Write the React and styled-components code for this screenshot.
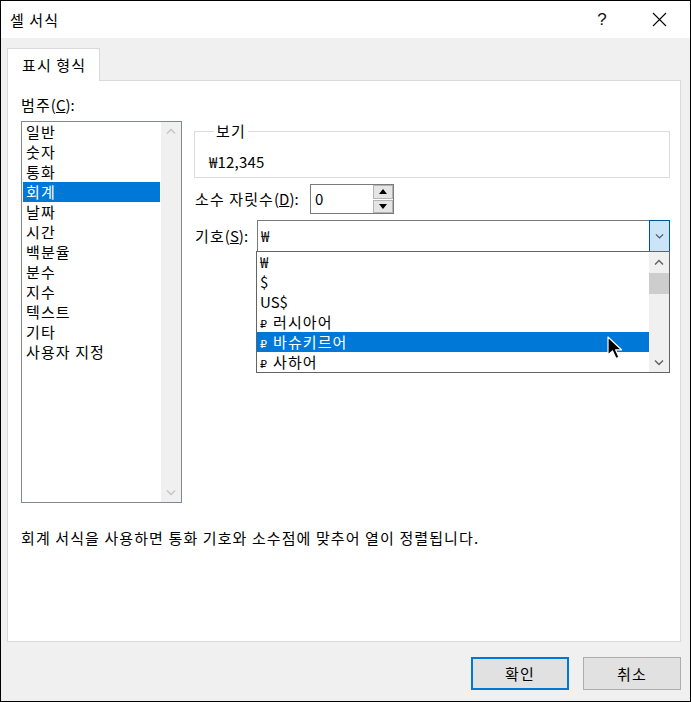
import React from 'react';
import styled, { createGlobalStyle } from 'styled-components';

const FONT = `"Noto Sans CJK KR", "Noto Sans", "DejaVu Sans", sans-serif`;

const GlobalStyle = createGlobalStyle`
  html, body { margin: 0; padding: 0; background: #fff; }
  body { font-family: ${FONT}; font-size: 15px; letter-spacing: 1.1px; color: #000; }
  * { box-sizing: border-box; }
`;

const categories = ['일반', '숫자', '통화', '회계', '날짜', '시간', '백분율', '분수', '지수', '텍스트', '기타', '사용자 지정'];
const symbols = [
  { sign: '₩' },
  { sign: '$' },
  { sign: 'US$' },
  { sign: '₽', name: '러시아어' },
  { sign: '₽', name: '바슈키르어' },
  { sign: '₽', name: '사하어' },
];

const Chevron = ({ dir = 'down', color = '#606060', size = 10 }) => (
  <svg width={size} height={size * 0.7} viewBox="0 0 10 7">
    <polyline
      points={dir === 'up' ? '1,5.5 5,1.5 9,5.5' : '1,1.5 5,5.5 9,1.5'}
      fill="none"
      stroke={color}
      strokeWidth="1.4"
    />
  </svg>
);

const Triangle = ({ dir }) => (
  <svg width="8" height="5" viewBox="0 0 8 5">
    <polygon points={dir === 'up' ? '0,5 4,0 8,5' : '0,0 8,0 4,5'} fill="#000" />
  </svg>
);

const App = () => {
  return (
    <>
      <GlobalStyle />
      <Window>
        <TitleBar>
          <Title>셀 서식</Title>
          <TitleButtons>
            <HelpMark>?</HelpMark>
            <CloseMark>
              <svg width="15" height="15" viewBox="0 0 15 15">
                <path d="M1 1 L14 14 M14 1 L1 14" stroke="#000" strokeWidth="1.1" />
              </svg>
            </CloseMark>
          </TitleButtons>
        </TitleBar>
        <Content>
          <TabStrip>
            <Tab>표시 형식</Tab>
          </TabStrip>
          <Panel>
            <Columns>
              <LeftCol>
                <Label>
                  범주<Key>(<u>C</u>):</Key>
                </Label>
                <ListBox>
                  <ListItems>
                    {categories.map((c, i) => (
                      <ListItem key={c} selected={i === 3}>
                        {c}
                      </ListItem>
                    ))}
                  </ListItems>
                  <ScrollTrack>
                    <ArrowBox>
                      <Chevron dir="up" color="#c5c5c5" />
                    </ArrowBox>
                    <ArrowBox>
                      <Chevron dir="down" color="#c5c5c5" />
                    </ArrowBox>
                  </ScrollTrack>
                </ListBox>
              </LeftCol>
              <RightCol>
                <GroupBox>
                  <Legend>보기</Legend>
                  <Preview>₩12,345</Preview>
                </GroupBox>
                <FieldRow top={6}>
                  <FieldLabel w={116}>
                    소수 자릿수<Key>(<u>D</u>):</Key>
                  </FieldLabel>
                  <Spinner>
                    <SpinValue>0</SpinValue>
                    <SpinButtons>
                      <SpinButton>
                        <Triangle dir="up" />
                      </SpinButton>
                      <SpinButton>
                        <Triangle dir="down" />
                      </SpinButton>
                    </SpinButtons>
                  </Spinner>
                </FieldRow>
                <FieldRow top={6}>
                  <FieldLabel w={63}>
                    기호<Key>(<u>S</u>):</Key>
                  </FieldLabel>
                  <Combo>
                    <ComboField>₩</ComboField>
                    <ComboButton>
                      <Chevron dir="down" color="#4a5a6a" size={9} />
                    </ComboButton>
                    <DropList>
                      <DropItems>
                        {symbols.map((s, i) => (
                          <DropItem key={i} selected={i === 4}>
                            {s.name ? (
                              <>
                                <SmallSign>{s.sign}</SmallSign>
                                {s.name}
                              </>
                            ) : (
                              <Key>{s.sign}</Key>
                            )}
                          </DropItem>
                        ))}
                      </DropItems>
                      <DropScroll>
                        <ArrowBox h={20}>
                          <Chevron dir="up" color="#606060" />
                        </ArrowBox>
                        <Thumb />
                        <Spacer />
                        <ArrowBox h={20}>
                          <Chevron dir="down" color="#606060" />
                        </ArrowBox>
                      </DropScroll>
                      <Cursor width="19" height="24" viewBox="0 0 19 24">
                        <path
                          d="M1 1 L1 19 L5.5 15 L9 22.5 L12 21.2 L8.6 13.8 L14.5 13.8 Z"
                          fill="#000"
                          stroke="#fff"
                          strokeWidth="1.2"
                          strokeLinejoin="round"
                        />
                      </Cursor>
                    </DropList>
                  </Combo>
                </FieldRow>
              </RightCol>
            </Columns>
            <Description>회계 서식을 사용하면 통화 기호와 소수점에 맞추어 열이 정렬됩니다.</Description>
          </Panel>
          <Footer>
            <DialogButton primary>확인</DialogButton>
            <DialogButton>취소</DialogButton>
          </Footer>
        </Content>
      </Window>
    </>
  );
};
export default App;

const Window = styled.div`
  width: 691px;
  height: 702px;
  border: 1px solid #000;
  background: #f0f0f0;
  display: flex;
  flex-direction: column;
  overflow: hidden;
`;
const TitleBar = styled.div`
  height: 37px;
  background: #fff;
  display: flex;
  align-items: center;
  justify-content: space-between;
  padding-left: 9px;
`;
const Title = styled.div`
  line-height: 20px;
`;
const TitleButtons = styled.div`
  display: flex;
  align-items: center;
  height: 100%;
`;
const HelpMark = styled.div`
  width: 52px;
  text-align: center;
  font-family: "Liberation Sans", sans-serif;
  font-size: 17px;
  letter-spacing: 0;
  color: #111;
`;
const CloseMark = styled.div`
  width: 62px;
  height: 100%;
  display: flex;
  align-items: center;
  justify-content: center;
`;
const Content = styled.div`
  flex: 1;
  display: flex;
  flex-direction: column;
  padding: 0 9px 0 6px;
`;
const TabStrip = styled.div`
  height: 42px;
  display: flex;
  align-items: flex-end;
`;
const Tab = styled.div`
  position: relative;
  z-index: 1;
  width: 93px;
  height: 33px;
  margin-bottom: -1px;
  background: #fff;
  border: 1px solid #d9d9d9;
  border-bottom: none;
  padding: 6px 0 0 14px;
  line-height: 20px;
  white-space: nowrap;
`;
const Panel = styled.div`
  height: 562px;
  background: #fff;
  border: 1px solid #d9d9d9;
  padding: 14px 10px 0 13px;
`;
const Columns = styled.div`
  display: grid;
  grid-template-columns: 161px 1fr;
  column-gap: 12px;
`;
const LeftCol = styled.div`
  display: flex;
  flex-direction: column;
`;
const Key = styled.span`
  letter-spacing: 0;
`;
const Label = styled.div`
  line-height: 20px;
  margin-bottom: 6px;
`;
const ListBox = styled.div`
  height: 382px;
  border: 1px solid #828790;
  display: flex;
`;
const ListItems = styled.div`
  flex: 1;
  padding: 0 1px;
`;
const ListItem = styled.div`
  height: 20px;
  line-height: 20px;
  padding-left: 3px;
  background: ${(p) => (p.selected ? '#0078d7' : 'transparent')};
  color: ${(p) => (p.selected ? '#fff' : '#000')};
  white-space: nowrap;
`;
const ScrollTrack = styled.div`
  width: 20px;
  background: #f0f0f0;
  display: flex;
  flex-direction: column;
  justify-content: space-between;
`;
const ArrowBox = styled.div`
  height: ${(p) => p.h || 19}px;
  display: flex;
  align-items: center;
  justify-content: center;
`;
const RightCol = styled.div`
  display: flex;
  flex-direction: column;
`;
const GroupBox = styled.fieldset`
  margin: 26px 0 0 0;
  padding: 11px 14px 5px 14px;
  border: 1px solid #dcdcdc;
  min-width: 0;
`;
const Legend = styled.legend`
  padding: 0 2px;
  margin-left: 5px;
  line-height: 20px;
  color: #000;
`;
const Preview = styled.div`
  line-height: 20px;
  letter-spacing: 0.2px;
`;
const FieldRow = styled.div`
  display: flex;
  align-items: center;
  margin-top: ${(p) => p.top}px;
`;
const FieldLabel = styled.div`
  width: ${(p) => p.w}px;
  padding-left: 1px;
  line-height: 20px;
  white-space: nowrap;
`;
const Spinner = styled.div`
  width: 84px;
  height: 30px;
  border: 1px solid #7a7a7a;
  display: flex;
`;
const SpinValue = styled.div`
  flex: 1;
  padding-left: 4px;
  line-height: 27px;
`;
const SpinButtons = styled.div`
  width: 20px;
  display: flex;
  flex-direction: column;
  gap: 1px;
`;
const SpinButton = styled.div`
  flex: 1;
  background: #e5e5e5;
  border: 1px solid #b4b4b4;
  display: flex;
  align-items: center;
  justify-content: center;
`;
const Combo = styled.div`
  position: relative;
  flex: 1;
  height: 32px;
  display: flex;
`;
const ComboField = styled.div`
  flex: 1;
  border: 1px solid #7a7a7a;
  border-right: none;
  padding-left: 3px;
  line-height: 30px;
`;
const ComboButton = styled.div`
  width: 21px;
  background: #cce4f7;
  border: 1px solid #005499;
  display: flex;
  align-items: center;
  justify-content: center;
`;
const DropList = styled.div`
  position: absolute;
  left: -1px;
  right: 0;
  top: 31px;
  height: 122px;
  background: #fff;
  border: 1px solid #646464;
  display: flex;
  z-index: 2;
`;
const DropItems = styled.div`
  flex: 1;
`;
const DropItem = styled.div`
  height: 20px;
  line-height: 20px;
  padding-left: 3px;
  background: ${(p) => (p.selected ? '#0078d7' : 'transparent')};
  color: ${(p) => (p.selected ? '#fff' : '#000')};
  white-space: nowrap;
`;
const SmallSign = styled.span`
  font-family: "DejaVu Sans", sans-serif;
  font-size: 11px;
  letter-spacing: 0;
  margin-right: 6px;
`;
const DropScroll = styled.div`
  width: 20px;
  background: #f0f0f0;
  display: flex;
  flex-direction: column;
`;
const Thumb = styled.div`
  height: 21px;
  margin-top: 1px;
  background: #cdcdcd;
`;
const Spacer = styled.div`
  flex: 1;
`;
const Cursor = styled.svg`
  position: absolute;
  left: 350px;
  top: 84px;
`;
const Description = styled.div`
  margin-top: 25px;
  line-height: 20px;
  white-space: nowrap;
`;
const Footer = styled.div`
  flex: 1;
  display: flex;
  justify-content: flex-end;
  gap: 14px;
  padding-top: 15px;
`;
const DialogButton = styled.div`
  width: 98px;
  height: 33px;
  background: #e1e1e1;
  border: ${(p) => (p.primary ? '2px solid #0078d7' : '1px solid #adadad')};
  display: flex;
  align-items: center;
  justify-content: center;
  line-height: 20px;
`;
